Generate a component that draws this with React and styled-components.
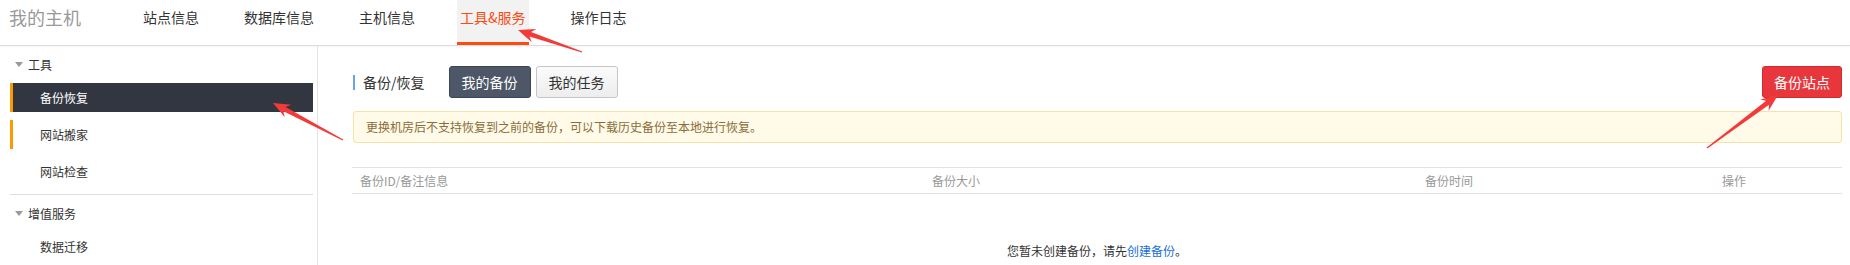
import styled, { createGlobalStyle } from "styled-components";

const GlobalStyle = createGlobalStyle`
  html, body {
    margin: 0;
    padding: 0;
    background: #fff;
  }
  body {
    font-family: "Noto Sans CJK SC", "Liberation Sans", sans-serif;
    color: #333;
  }
`;

const Page = styled.div`
  position: relative;
  width: 1850px;
  height: 265px;
  overflow: hidden;
  display: flex;
  flex-direction: column;
`;

const Header = styled.header`
  height: 46px;
  box-sizing: border-box;
  display: flex;
  align-items: flex-start;
  border-bottom: 1px solid #dcdcdc;
  box-shadow: 0 1px 2px rgba(0, 0, 0, 0.04);
  flex-shrink: 0;
`;

const Logo = styled.div`
  width: 131px;
  padding-left: 9px;
  font-size: 18px;
  line-height: 34px;
  color: #999;
`;

const Nav = styled.nav`
  display: flex;
  gap: 39px;
`;

const NavItem = styled.a`
  display: block;
  height: 45px;
  box-sizing: border-box;
  padding: 0 3px;
  font-size: 14px;
  line-height: 34px;
  color: ${(p) => (p.$active ? "#ff4a12" : "#333")};
  background: ${(p) => (p.$active ? "#f2f2f2" : "transparent")};
  border-bottom: 3px solid ${(p) => (p.$active ? "#ff4a12" : "transparent")};
  cursor: pointer;
`;

const Body = styled.div`
  flex: 1;
  display: flex;
`;

const Sidebar = styled.aside`
  width: 318px;
  box-sizing: border-box;
  padding: 0 4px 0 10px;
  border-right: 1px solid #e3e3e3;
  flex-shrink: 0;
`;

const GroupHeader = styled.div`
  height: 37px;
  display: flex;
  align-items: center;
  gap: 5px;
  padding-left: 5px;
  font-size: 12px;
  color: #333;
`;

const Caret = styled.span`
  width: 0;
  height: 0;
  border-left: 4px solid transparent;
  border-right: 4px solid transparent;
  border-top: 5px solid #999;
`;

const SideItem = styled.div`
  height: 29px;
  margin-bottom: 8px;
  box-sizing: border-box;
  padding-left: 27px;
  border-left: 3px solid
    ${(p) => (p.$active || p.$hover ? "#ff9900" : "transparent")};
  background: ${(p) => (p.$active ? "#313640" : "transparent")};
  color: ${(p) => (p.$active ? "#fff" : "#333")};
  font-size: 12px;
  line-height: 29px;
`;

const Divider = styled.div`
  height: 1px;
  background: #dedede;
`;

const Main = styled.main`
  flex: 1;
  padding: 20px 8px 0 35px;
`;

const TitleRow = styled.div`
  height: 32px;
  display: flex;
  align-items: center;
`;

const Title = styled.h2`
  margin: 0 24px 0 0;
  padding-left: 8px;
  border-left: 2px solid #6aa6e2;
  font-size: 14px;
  font-weight: normal;
  line-height: 15px;
  color: #333;
`;

const TabButton = styled.button`
  width: 82px;
  height: 32px;
  margin-right: 5px;
  border-radius: 3px;
  font-family: inherit;
  font-size: 14px;
  cursor: pointer;
  border: 1px solid ${(p) => (p.$active ? "#3d4553" : "#c6c6c6")};
  background: ${(p) =>
    p.$active ? "#4d5767" : "linear-gradient(#fbfbfb, #ededed)"};
  color: ${(p) => (p.$active ? "#fff" : "#333")};
`;

const Spacer = styled.div`
  margin-left: auto;
`;

const DangerButton = styled.button`
  width: 80px;
  height: 32px;
  border-radius: 3px;
  border: 1px solid #d42a2f;
  background: #e8373c;
  color: #fff;
  font-family: inherit;
  font-size: 14px;
  cursor: pointer;
`;

const Alert = styled.div`
  margin-top: 13px;
  height: 32px;
  box-sizing: border-box;
  padding-left: 12px;
  border: 1px solid #f8e2a4;
  border-radius: 3px;
  background: #fffbe8;
  color: #8a6d3b;
  font-size: 12px;
  line-height: 30px;
`;

const Table = styled.div`
  margin-top: 24px;
  margin-left: -1px;
`;

const HeadRow = styled.div`
  display: grid;
  grid-template-columns: 572px 493px 297px 1fr;
  height: 27px;
  box-sizing: border-box;
  border-top: 1px solid #e2e2e2;
  border-bottom: 1px solid #e2e2e2;
`;

const HeadCell = styled.div`
  padding-left: 8px;
  font-size: 12px;
  line-height: 25px;
  color: #999;
`;

const Empty = styled.div`
  padding-top: 50px;
  text-align: center;
  font-size: 12px;
  line-height: 14px;
  color: #333;
`;

const Link = styled.a`
  color: #1a6fd8;
  text-decoration: none;
`;

const Overlay = styled.svg`
  position: absolute;
  left: 0;
  top: 0;
  width: 1850px;
  height: 265px;
  pointer-events: none;
`;

// tapered screenshot-style annotation arrow
const arrowPoints = (tail, tip) => {
  const dx = tip[0] - tail[0];
  const dy = tip[1] - tail[1];
  const len = Math.hypot(dx, dy);
  const ux = dx / len;
  const uy = dy / len;
  const nx = -uy;
  const ny = ux;
  const at = (d, w) => [tail[0] + ux * d + nx * w, tail[1] + uy * d + ny * w];
  const pts = [
    at(0, 0.6),
    at(len - 13, 2.4),
    at(len - 17, 7),
    tip,
    at(len - 17, -7),
    at(len - 13, -2.4),
    at(0, -0.6),
  ];
  return pts.map((p) => p.join(",")).join(" ");
};

const arrows = [
  { tail: [582, 52], tip: [518, 30] },
  { tail: [343, 140], tip: [273, 103] },
  { tail: [1707, 148], tip: [1778, 95] },
];

const navItems = ["站点信息", "数据库信息", "主机信息", "工具&服务", "操作日志"];

const App = () => {
  return (
    <>
      <GlobalStyle />
      <Page>
        <Header>
          <Logo>我的主机</Logo>
          <Nav>
            {navItems.map((item) => (
              <NavItem key={item} $active={item === "工具&服务"}>
                {item}
              </NavItem>
            ))}
          </Nav>
        </Header>

        <Body>
          <Sidebar>
            <GroupHeader>
              <Caret />
              工具
            </GroupHeader>
            <SideItem $active>备份恢复</SideItem>
            <SideItem $hover>网站搬家</SideItem>
            <SideItem>网站检查</SideItem>
            <Divider />
            <GroupHeader>
              <Caret />
              增值服务
            </GroupHeader>
            <SideItem>数据迁移</SideItem>
          </Sidebar>

          <Main>
            <TitleRow>
              <Title>备份/恢复</Title>
              <TabButton $active>我的备份</TabButton>
              <TabButton>我的任务</TabButton>
              <Spacer />
              <DangerButton>备份站点</DangerButton>
            </TitleRow>

            <Alert>
              更换机房后不支持恢复到之前的备份，可以下载历史备份至本地进行恢复。
            </Alert>

            <Table>
              <HeadRow>
                <HeadCell>备份ID/备注信息</HeadCell>
                <HeadCell>备份大小</HeadCell>
                <HeadCell>备份时间</HeadCell>
                <HeadCell>操作</HeadCell>
              </HeadRow>
              <Empty>
                您暂未创建备份，请先<Link href="#">创建备份</Link>。
              </Empty>
            </Table>
          </Main>
        </Body>

        <Overlay viewBox="0 0 1850 265">
          {arrows.map((a, i) => (
            <polygon key={i} points={arrowPoints(a.tail, a.tip)} fill="#f33a3a" />
          ))}
        </Overlay>
      </Page>
    </>
  );
};

export default App;
